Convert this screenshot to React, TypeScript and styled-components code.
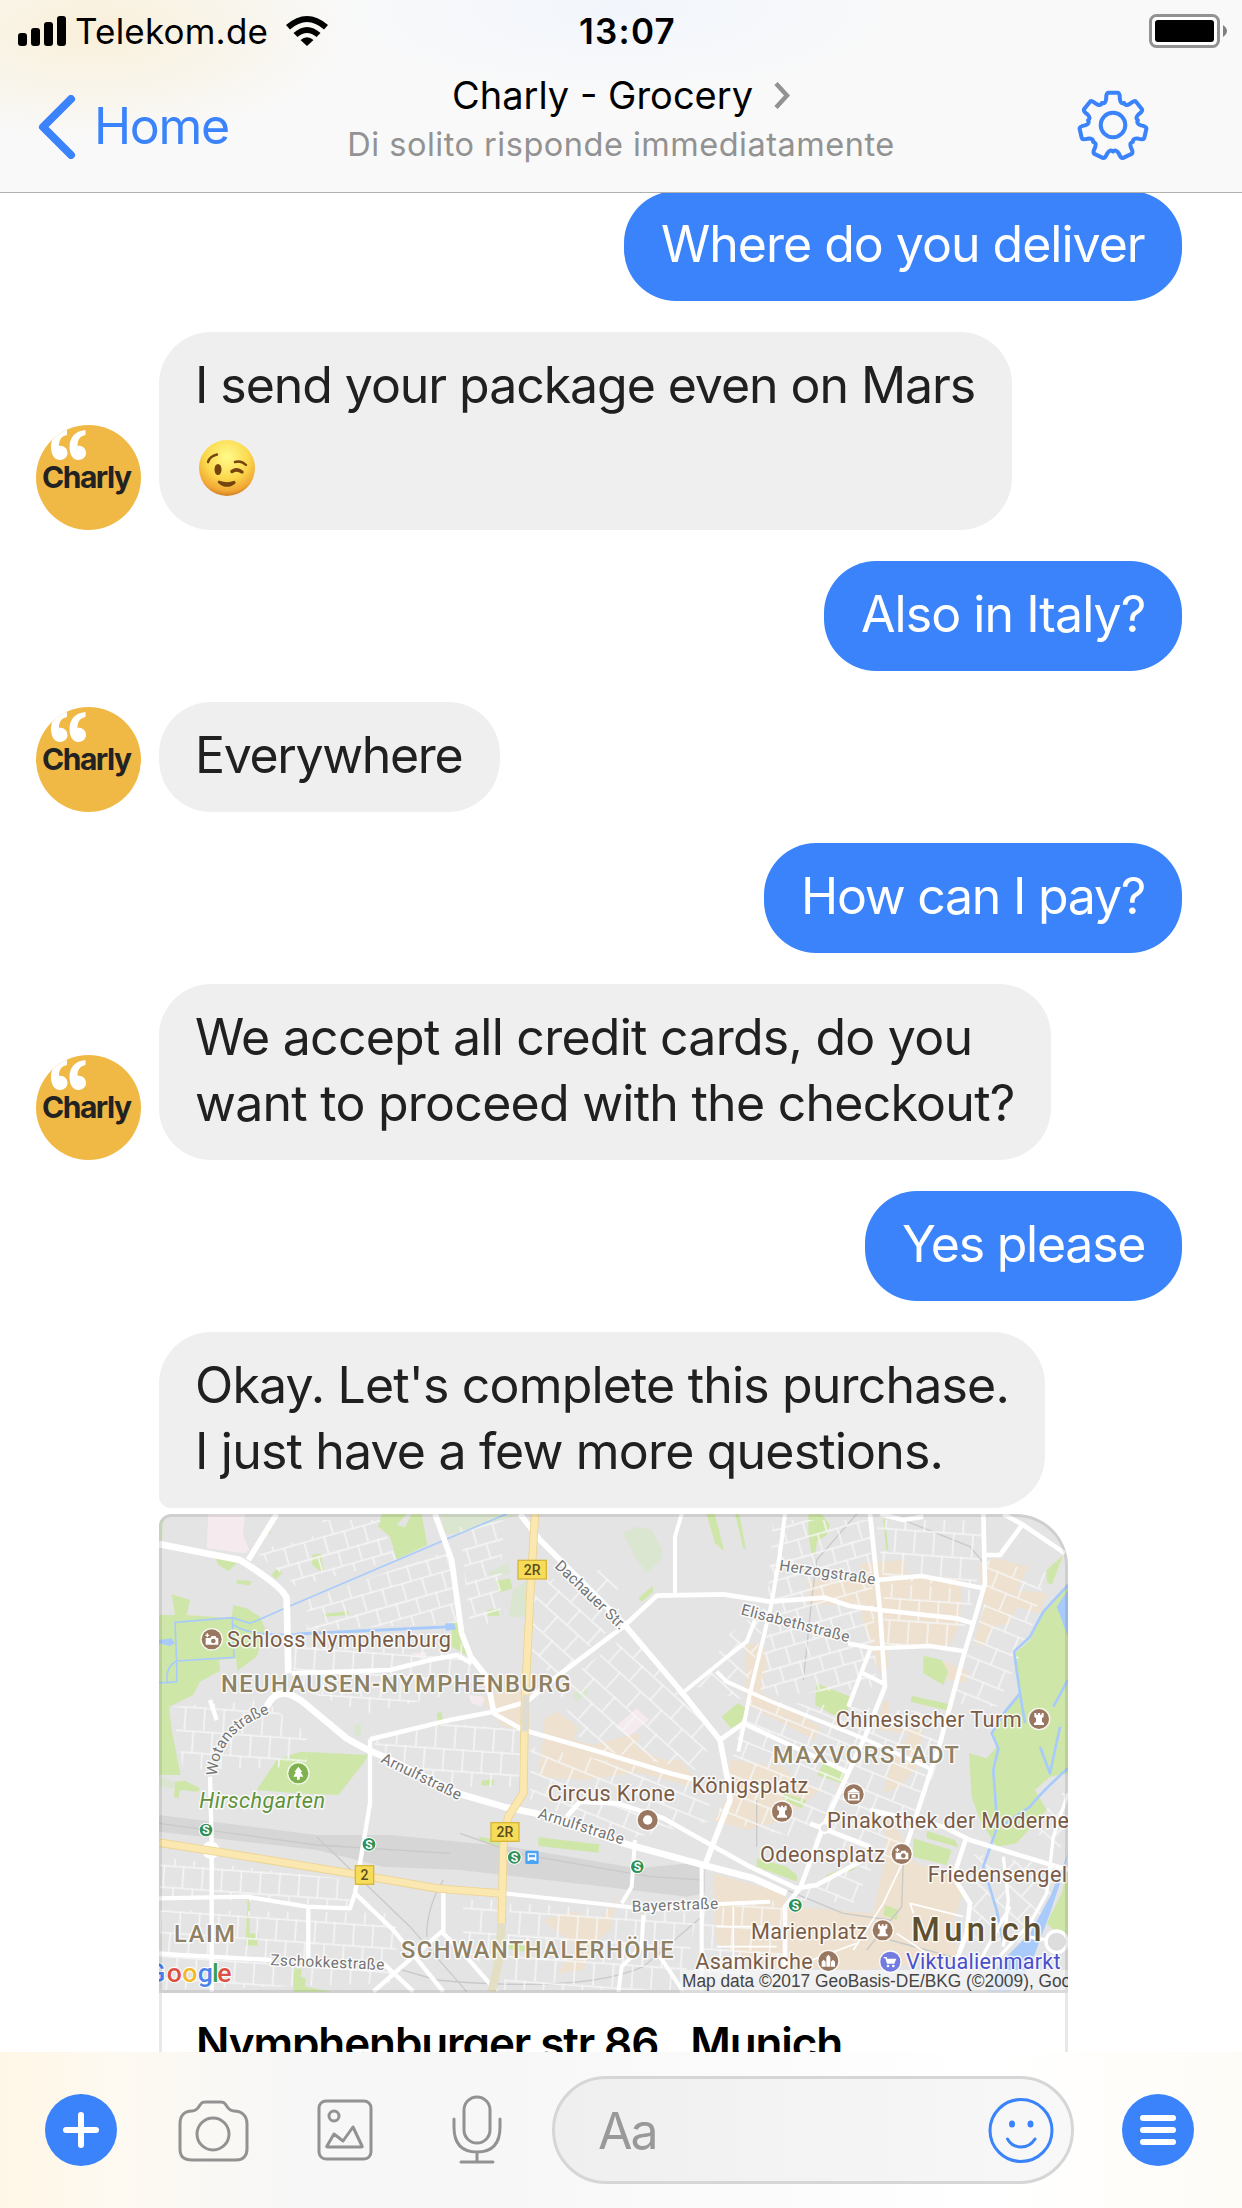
import React from "react";
import styled, { createGlobalStyle } from "styled-components";

const BLUE = "#3a83fa";
const SANS = `Inter, "Liberation Sans", sans-serif`;

const Global = createGlobalStyle`
  * { box-sizing: border-box; }
  body { margin: 0; background: #fff; font-family: ${SANS}; }
  svg { display: block; flex: none; }
`;

const Screen = styled.div`
  width: 1242px;
  height: 2208px;
  display: flex;
  flex-direction: column;
  overflow: hidden;
  background: #fff;
`;

const Header = styled.header`
  height: 193px;
  flex: none;
  border-bottom: 1px solid #b0b0b0;
  background:
    radial-gradient(ellipse 260px 110px at 90px 30px, #f9f0da 0%, rgba(249, 240, 218, 0) 100%),
    radial-gradient(ellipse 300px 90px at 620px 10px, #f2f6fc 0%, rgba(242, 246, 252, 0) 100%),
    #f9f9f9;
`;

const StatusBar = styled.div`
  height: 61px;
  display: grid;
  grid-template-columns: 1fr auto 1fr;
  align-items: center;
  padding: 0 14px 0 18px;
`;

const Carrier = styled.div`
  display: flex;
  align-items: center;
  font-size: 35px;
  letter-spacing: 0.2px;
  color: #000;
`;

const CarrierName = styled.span`
  margin: 0 18px 0 8px;
`;

const Time = styled.div`
  font-size: 35px;
  font-weight: 600;
  letter-spacing: 1.2px;
  padding-left: 9px;
`;

const BatterySlot = styled.div`
  display: flex;
  justify-content: flex-end;
`;

const NavBar = styled.div`
  height: 131px;
  display: grid;
  grid-template-columns: 1fr auto 1fr;
  padding: 0 93px 0 36px;
`;

const Back = styled.a`
  display: flex;
  align-items: center;
  gap: 14px;
  height: 131px;
  color: ${BLUE};
  font-size: 50px;
  letter-spacing: -1.3px;
`;

const BackLabel = styled.span`
  padding-bottom: 2px;
`;

const TitleStack = styled.div`
  display: flex;
  flex-direction: column;
  align-items: center;
  padding-left: 57px;
`;

const Title = styled.div`
  display: flex;
  align-items: center;
  gap: 21px;
  height: 69px;
  padding-bottom: 1px;
  font-size: 38px;
`;

const Subtitle = styled.div`
  height: 30px;
  line-height: 30px;
  font-size: 32.5px;
  letter-spacing: 0.5px;
  color: #929292;
`;

const GearSlot = styled.div`
  display: flex;
  justify-content: flex-end;
  padding-top: 28px;
`;

const Chat = styled.main`
  flex: 1;
  min-height: 0;
  overflow: hidden;
  display: flex;
  flex-direction: column;
  gap: 31px;
  padding: 0 60px 0 36px;
`;

const Row = styled.div<{ $mine?: boolean }>`
  flex: none;
  display: flex;
  align-items: flex-end;
  justify-content: ${(p) => (p.$mine ? "flex-end" : "flex-start")};
  gap: 18px;
  &:first-child { margin-top: -2px; }
`;

const Bubble = styled.div<{ $mine?: boolean; $w: number; $track?: number; $joined?: boolean }>`
  width: ${(p) => p.$w}px;
  padding: 20px 0 24px ${(p) => (p.$mine ? 37 : 36)}px;
  border-radius: ${(p) => (p.$joined ? "52px 52px 52px 12px" : "52px")};
  background: ${(p) => (p.$mine ? BLUE : "#efefef")};
  color: ${(p) => (p.$mine ? "#fff" : "#202020")};
  font-size: 50px;
  line-height: 66px;
  letter-spacing: ${(p) => p.$track ?? 0}px;
  white-space: pre;
`;

const EmojiLine = styled.div`
  height: 88px;
  padding: 21px 0 0 3px;
`;

const Stack = styled.div`
  display: flex;
  flex-direction: column;
  gap: 6px;
  padding-left: 123px;
`;

const Card = styled.article`
  width: 909px;
  height: 620px;
  border-radius: 12px 52px 52px 52px;
  overflow: hidden;
  box-shadow: inset 0 0 0 3px #e8e8e8;
`;

const MapFrame = styled.div`
  position: relative;
  height: 479px;
  &::after {
    content: "";
    position: absolute;
    inset: 0;
    border: 3px solid rgba(0, 0, 0, 0.09);
    border-radius: 12px 52px 0 0;
  }
`;

const CardTitle = styled.h2`
  margin: 0;
  padding: 17px 0 0 37px;
  font-size: 44px;
  line-height: 66px;
  font-weight: 600;
  letter-spacing: -1.1px;
  white-space: pre;
`;

const Composer = styled.footer`
  height: 156px;
  flex: none;
  display: flex;
  align-items: center;
  padding: 0 48px 0 45px;
  background:
    linear-gradient(90deg, rgba(255, 247, 230, 1) 0, rgba(255, 250, 240, 0.8) 120px, rgba(247, 247, 247, 0) 300px),
    linear-gradient(90deg, #f7f7f7 0, #f7f7f7 500px, #fff 980px, #fefcf7 1242px);
`;

const Tools = styled.div`
  display: flex;
  align-items: center;
  width: 507px;
`;

const Tool = styled.div<{ $gap: number }>`
  margin-right: ${(p) => p.$gap}px;
`;

const Input = styled.div`
  width: 522px;
  height: 108px;
  display: flex;
  align-items: center;
  justify-content: space-between;
  padding: 0 17px 0 43px;
  border: 3px solid #d6d6d6;
  border-radius: 54px;
  background: linear-gradient(90deg, #efefef, #f8f8f8);
  font-size: 50px;
  letter-spacing: -2px;
  color: #999;
`;

const Placeholder = styled.span`
  padding-top: 2px;
`;

const MenuSlot = styled.div`
  margin-left: auto;
`;

const AvatarSvg = () => (
  <svg width="105" height="105" viewBox="0 0 105 105">
    <defs><clipPath id="av"><circle cx="52.5" cy="52.5" r="52.5" /></clipPath></defs>
    <g clipPath="url(#av)">
      <rect width="105" height="105" fill="#f0b945" />
      {[15, 33.5].map((x) => (
        <path key={x} transform={`translate(${x} 5)`} fill="#fff" d="M16 0V5C11 6 8 9 8 16C12 15 16.500 18 16.500 23C16.500 27 13 30 9 30C3 30 0 24 0 17C0 8 5 1 16 0Z" />
      ))}
      <text x="6" y="62.500" textLength="90" fontFamily={SANS} fontWeight="700" fontSize="30" fill="#222">Charly</text>
    </g>
  </svg>
);

const Wink = () => (
  <svg width="58" height="58" viewBox="0 0 58 58">
    <defs>
      <radialGradient id="face" cx=".5" cy=".3" r=".72">
        <stop offset="0" stopColor="#fffb8c" /><stop offset=".55" stopColor="#fbd84c" />
        <stop offset=".85" stopColor="#f2a735" /><stop offset="1" stopColor="#c9761f" />
      </radialGradient>
    </defs>
    <circle cx="29" cy="29" r="28" fill="url(#face)" />
    <ellipse cx="20" cy="30.500" rx="3.500" ry="5.500" fill="#74430e" />
    <g fill="none" stroke="#74430e" strokeLinecap="round" strokeWidth="2.400">
      <path d="M10 23Q12 17 19 15.500M37 23Q43 21 48 26" />
      <path d="M34 32.500Q39 29 44 33" strokeWidth="3.500" />
      <path d="M21 43Q29 50 37 43Q29 46 21 43" strokeWidth="2.600" />
    </g>
  </svg>
);

const gearPath = () => {
  const pt = (r: number, deg: number) => {
    const a = ((deg - 90) * Math.PI) / 180;
    return `${(36 + r * Math.cos(a)).toFixed(1)} ${(37 + r * Math.sin(a)).toFixed(1)}`;
  };
  let d = "";
  for (let i = 0; i < 7; i++) {
    const c = (i * 360) / 7;
    d += `${i ? "L" : "M"}${pt(28, c - 14)}Q${pt(33.8, c - 12)} ${pt(33.5, c - 8)}L${pt(33.5, c + 8)}Q${pt(33.8, c + 12)} ${pt(28, c + 14)}`;
    d += `Q${pt(23, c + 19)} ${pt(25.5, c + 25.7)}Q${pt(23, c + 32.4)} ${pt(28, c + 37.4)}`;
  }
  return d + "Z";
};

const Gear = () => (
  <svg width="72" height="74" viewBox="0 0 72 74" fill="none" stroke={BLUE} strokeWidth="4" strokeLinejoin="round">
    <path d={gearPath()} /><circle cx="36" cy="36" r="12.300" />
  </svg>
);

/* ---------- Map ---------- */

const GREEN = "#cfe6a9";
const PALE = "#dbe6d0";

const greens = [
  "M250 315L290 325 330 350 345 385 320 470 262 512 258 475 207 480 210 512 150 545 130 585 57 620 65 690 92 825 27 825 27 345 75 345 65 283 120 300 110 345 245 355Z",
  "M195 172L265 185 235 213 205 195Z", "M365 225L380 205 398 218 378 238Z", "M258 250L262 240 303 243 300 257Z",
  "M487 165L512 160 522 215 505 210 487 195Z", "M695 42H770L740 75 765 82 785 42H815L832 135 740 178 720 110 685 80Z",
  "M518 342L595 333 597 345 520 350Z", "M365 42L350 90 370 102 345 95Z", "M905 365L930 360 935 400 965 475 905 440Z",
  "M380 780L450 755 655 765 640 790 565 885 440 880 320 870Z", "M75 845L105 842 150 865 145 875 90 870 85 895 72 890Z",
  "M860 640L875 635 880 670 865 680Z", "M1038 243L1080 235 1088 265 1045 278Z", "M1012 330L1045 325 1047 347 1014 347Z",
  "M1670 42H1695L1722 152 1695 130Z", "M1465 295L1508 258 1510 275 1475 305Z", "M1755 42H1768L1788 148 1780 145Z",
  "M1715 650L1750 620 1765 610 1788 625 1780 665 1742 685Z", "M1975 42H2015L2040 75 2030 105 2000 125 1997 165 1985 165 1975 100Z",
  "M2200 55H2206L2215 150H2208Z", "M2320 467L2375 480 2395 515 2380 555 2320 520Z", "M2285 587L2395 612 2395 632 2282 605Z",
  "M2000 550L2100 590 2095 630 2050 645 1995 615Z", "M2740 165L2690 210 2690 245 2705 255Z",
  "M2754 250L2680 340 2640 420 2595 460 2595 510 2610 580 2560 640 2525 700 2545 735 2510 775 2457 760 2465 890 2490 960 2540 1040 2600 1030 2690 930 2655 870 2700 830 2754 820Z",
  "M2754 1100L2735 1180 2690 1270 2754 1330Z", "M2290 1015L2405 1050 2390 1095 2290 1070Z", "M2330 992L2415 1020 2425 1042 2330 1015Z",
  "M1820 1075L1910 1100 1940 1125 1942 1145 1820 1100Z", "M2205 1215L2245 1230 2240 1260 2200 1245Z",
  "M2020 790L2085 815 2075 850 2000 825Z", "M1900 880L1970 900 1955 925 1900 900Z", "M995 842L1030 837 1032 855 995 857Z",
  "M1165 1012L1348 1033 1345 1058 1165 1038Z", "M985 1010L1050 1020 1050 1045 990 1020Z",
  "M293 1200H300L298 1300 325 1302 322 1338 285 1335 288 1300Z", "M430 1405L455 1408 452 1430 467 1435 465 1460 545 1475H430Z",
  "M1080 1330L1140 1340 1120 1355 1070 1345Z", "M2030 1125L2130 1085 2110 1110 2030 1135Z",
];
const pales = [
  "M870 42H1110L930 102 885 100Z", "M1015 220L1075 187 1080 220 1020 235Z", "M1090 270L1130 240V350H1075Z",
  "M1420 100L1460 80 1505 90 1537 150 1535 180 1490 218 1460 180Z", "M1270 580L1310 562 1315 580 1275 605Z",
  "M612 675L632 670 634 705 615 708Z", "M27 60L42 62 38 120H27Z", "M27 830L75 845 70 865 27 860Z",
];
const beiges = [
  "M1000 590L1130 560 1120 690 1060 680 1010 620Z", "M1185 655L1220 635 1285 680 1270 720 1335 735 1400 715 1470 700 1460 745 1590 800 1590 850 1400 800 1170 810 1180 700Z",
  "M1785 435L1840 430 1850 490 1835 580 2010 680 1995 720 1860 650 1785 610Z",
  "M1975 240L2140 245 2130 190 2265 180 2270 220 2435 240 2430 370 2400 435 2215 445 2215 500 2190 520 2140 370 2130 320 1970 310Z",
  "M2490 195L2535 175 2635 200 2600 270 2690 280 2670 340 2600 320 2580 370 2530 380 2500 440 2470 430 2500 330Z",
  "M2370 480L2420 500 2455 515 2445 550 2395 540Z", "M2200 600L2220 610 2215 680 2320 690 2300 800 2250 860 2200 880 2220 800 2280 700 2180 690Z",
  "M1170 780H1590L1640 840 1610 860 1520 810 1300 840 1170 830Z", "M1740 780L1900 800 1940 850 2010 870 1900 960 1790 990 1690 960 1740 880Z",
  "M2200 950L2250 1000 2290 1085 2400 1130 2440 1170 2400 1300 2440 1380 2140 1410 1840 1400 1700 1330 1690 1120 1900 1180 1920 1220 2170 1240 2210 1050Z",
  "M1180 1260L1270 1235 1350 1260 1400 1190 1380 1290 1330 1330 1300 1410 1220 1420 1280 1340Z",
];
const pinks = ["M175 42H285L278 105 298 150 285 160 170 145Z", "M1395 680L1460 625 1497 660 1435 710Z", "M785 460L830 455 825 485Z", "M955 585L1005 590 995 620 965 610Z"];

const quarters: [string, string][] = [
  ["M310 150L480 120 520 60 690 60 740 180 440 260Z", "a"],
  ["M470 300L900 150 930 370 470 390Z", "a"],
  ["M430 440L930 420 1000 560 650 640 430 560Z", "b"],
  ["M65 620L340 600 470 700 470 800 100 810Z", "b"],
  ["M670 720L900 670 1110 690 1110 860 930 860 690 790Z", "b"],
  ["M930 80L1060 60 1050 350 960 400Z", "a"],
  ["M1150 250L1400 200 1410 360 1230 520 1130 500Z", "c"],
  ["M1220 560L1440 400 1700 700 1640 810 1300 740Z", "c"],
  ["M1140 740L1640 830 1700 960 1420 1020 1140 900Z", "d"],
  ["M1740 400L1860 310 1780 600 1640 560Z", "c"],
  ["M1870 60L2160 60 2180 560 1830 590Z", "a"],
  ["M2180 60L2500 60 2480 260 2200 240Z", "b"],
  ["M2200 250L2480 270 2420 450 2200 440Z", "b"],
  ["M2510 180L2690 220 2640 400 2540 620 2400 610 2500 330Z", "d"],
  ["M1790 600L2400 640 2350 830 2250 1080 1700 960Z", "d"],
  ["M30 1070L600 1140 600 1220 30 1190Z", "b"],
  ["M30 1230L740 1240 740 1450 30 1470Z", "b"],
  ["M940 1200L1050 1200 1030 1420 940 1350Z", "b"],
  ["M1080 1210L1640 1240 1600 1470 1060 1470Z", "b"],
  ["M1660 1230L1900 1200 1900 1400 1660 1460Z", "b"],
  ["M1950 1160L2180 1080 2110 1210 1950 1200Z", "d"],
  ["M2450 1060L2740 1100 2650 1330 2470 1320Z", "c"],
  ["M2640 980L2754 860 2730 1060Z", "c"],
];

const roads: [string, number][] = [
  ["M27 132L270 180Q400 260 410 295L415 520M350 620Q370 580 400 580Q430 580 470 615L590 715Q650 750 690 765L930 882 1060 920 1180 945 1420 1030 1660 1095 1810 1135 1910 1180", 20],
  ["M380 42L295 180M855 42L905 180 935 400 962 470 1010 530 1030 630M1110 42L1170 120 1420 370 1590 570 1710 720 1735 850 1740 900 1665 1095", 17],
  ["M425 520L720 510 850 478 920 465 965 490M660 718L900 660 1030 635 1130 605 1220 530 1420 380 1520 287 1720 283 1860 305 2025 293 2100 318 2190 330 2420 355 2475 372", 14],
  ["M1575 285V110L1595 42M1590 585L1720 480 1790 425 1815 360M1905 42L1890 160 1865 310 1800 580 1765 755M1700 515L1730 545 1860 603 2140 715 2350 810", 12],
  ["M1710 720L1780 670 1920 735 2100 820M1030 640L1120 690 1330 750 1560 820 1640 840M2160 42L2190 330 2205 560 2145 710 2020 980 1950 1165 1905 1220 1905 1400", 14],
  ["M2180 240L2315 228 2500 265M2500 42L2505 250 2470 370 2440 470 2370 730 2340 820 2265 1050M2505 165H2550L2620 70M2560 42L2620 75 2745 160M2190 42L2260 60 2320 50", 14],
  ["M2095 430L2170 445 2340 438 2450 455M2160 450L2095 620M2140 520L2200 550M180 830L185 1020 185 1475M180 600L200 660", 13],
  ["M27 1195L290 1190 470 1220 600 1225 615 1180 640 1030 660 910 660 718M475 1225V1380M27 1360L90 1365 365 1380", 13],
  ["M615 1180L730 1290 880 1475M670 1475L875 1295 940 1360 1040 1475M700 1390L790 1475M880 1175V1295", 13],
  ["M1060 1180L1430 1220 1490 1230 1710 1212 1860 1205M1455 1020L1445 1160 1415 1210M1480 1245L1475 1340 1415 1400 1405 1475M1655 1090V1475M1530 1370L1600 1475", 12],
  ["M1250 950L1290 905 1400 910 1540 955 1800 1100 1940 1165 2000 1155 2140 1080M1980 970L2160 1040M2160 930L2380 980 2460 1020 2754 1110M2450 1010L2410 1130 2460 1210 2450 1300 2420 1380", 14],
  ["M2560 1070L2575 1200 2560 1340M2754 880L2710 1010 2690 1180 2640 1270 2520 1400M2580 1220L2480 1400M2630 1310L2754 1330", 10],
  ["M2280 1040L2200 1210 2110 1350M2290 1240L2280 1210 2440 1250M2240 1300L2360 1380M1960 1390L2120 1330M1700 1280H1880M1700 1340H1880M1750 1220V1400", 5],
];

type Label = { t: string; x: number; y: number; w: number; s?: number; c?: string; r?: number; wt?: number; i?: boolean };
const BROWN = "#7b5c47";
const OLIVE = "#8f8264";
const GRAY = "#747474";
const labels: Label[] = [
  { t: "Schloss Nymphenburg", x: 231, y: 440, w: 672 },
  { t: "NEUHAUSEN-NYMPHENBURG", x: 213, y: 575, w: 1049, s: 71, c: OLIVE, wt: 500 },
  { t: "Chinesischer Turm", x: 2057, y: 680, w: 558 },
  { t: "MAXVORSTADT", x: 1868, y: 790, w: 559, s: 71, c: OLIVE, wt: 500 },
  { t: "Hirschgarten", x: 148, y: 923, w: 377, s: 65, c: "#5f9339", i: true },
  { t: "Circus Krone", x: 1193, y: 902, w: 382 },
  { t: "Königsplatz", x: 1625, y: 878, w: 350 },
  { t: "Pinakothek der Moderne", x: 2031, y: 985, w: 726 },
  { t: "Odeonsplatz", x: 1830, y: 1085, w: 375 },
  { t: "Friedensengel", x: 2333, y: 1147, w: 418 },
  { t: "Marienplatz", x: 1803, y: 1317, w: 349 },
  { t: "Munich", x: 2284, y: 1322, w: 390, s: 98, c: "#5d4f30", wt: 500 },
  { t: "Asamkirche", x: 1636, y: 1407, w: 352 },
  { t: "Viktualienmarkt", x: 2268, y: 1407, w: 464, c: "#4a4fcc" },
  { t: "LAIM", x: 72, y: 1327, w: 183, s: 71, c: OLIVE, wt: 500 },
  { t: "SCHWANTHALERHÖHE", x: 753, y: 1375, w: 818, s: 71, c: OLIVE, wt: 500 },
  { t: "Dachauer Str.", x: 1212, y: 200, w: 276, s: 46, c: GRAY, r: 44 },
  { t: "Herzogstraße", x: 1886, y: 211, w: 291, s: 46, c: GRAY, r: 8.500 },
  { t: "Elisabethstraße", x: 1771, y: 343, w: 334, s: 46, c: GRAY, r: 14.500 },
  { t: "Arnulfstraße", x: 690, y: 786, w: 262, s: 46, c: GRAY, r: 26 },
  { t: "Arnulfstraße", x: 1162, y: 953, w: 267, s: 46, c: GRAY, r: 17.500 },
  { t: "Bayerstraße", x: 1446, y: 1235, w: 259, s: 46, c: GRAY, r: -2 },
  { t: "Zschokkestraße", x: 361, y: 1395, w: 342, s: 46, c: GRAY, r: 2.500 },
];

const MapText = styled.text`
  font-family: Roboto, sans-serif;
  paint-order: stroke;
  stroke: rgba(255, 255, 255, 0.8);
  stroke-width: 9px;
  stroke-linejoin: round;
`;

const LogoText = styled.text`
  font-family: Roboto, sans-serif;
  font-size: 80px;
  font-weight: 500;
  paint-order: stroke;
  stroke: #fff;
  stroke-width: 6px;
`;

const Poi = ({ x, y, kind, color = "#997761" }: { x: number; y: number; kind: string; color?: string }) => (
  <g transform={`translate(${x} ${y})`}>
    <circle r="34" fill="#fff" opacity=".8" />
    <circle r="30" fill={color} />
    {kind === "camera" && <g><path d="M-18 -4H-4L0 -10H12L15 -4H20V16H-18Z" fill="#fff" /><circle cx="5" cy="5" r="7" fill={color} /><path d="M-13 -18V-6M-19 -12H-7" stroke="#fff" strokeWidth="4" /></g>}
    {kind === "rook" && <path d="M-14 -18H-8V-13H-3V-18H3V-13H8V-18H14V-6L9 -3V8L15 13V18H-15V13L-9 8V-3L-14 -6Z" fill="#fff" />}
    {kind === "tree" && <path d="M0 -20L12 -4H7L15 10H4V19H-4V10H-15L-7 -4H-12Z" fill="#fff" />}
    {kind === "ring" && <circle r="14" fill="#fff" />}
    {kind === "museum" && <g><path d="M0 -19L20 -6H-20Z" fill="#fff" /><path d="M-15 -3V16H15V-3Z" fill="none" stroke="#fff" strokeWidth="5" /><path d="M-6 2H6V10H-6Z" fill="#fff" /></g>}
    {kind === "city" && <path d="M-20 17V2L-14 -4L-8 2V17M-6 17V-12L0 -19L6 -12V17M8 17V2L14 -4L20 2V17" fill="#fff" />}
    {kind === "cart" && <g fill="#fff"><path d="M-20 -14H-11L-9 -9H18L12 6H-10L-15 -10H-20Z" /><circle cx="-7" cy="13" r="4" /><circle cx="9" cy="13" r="4" /></g>}
  </g>
);

const SBahn = ({ x, y }: { x: number; y: number }) => (
  <g transform={`translate(${x} ${y})`}>
    <circle r="22" fill="#fff" /><circle r="19" fill="#2f9157" />
    <text y="13" textAnchor="middle" fontFamily="Roboto, sans-serif" fontWeight="700" fontSize="36" fill="#fff">S</text>
  </g>
);

const Shield = ({ x, y, w, t }: { x: number; y: number; w: number; t: string }) => (
  <g>
    <rect x={x} y={y} width={w} height="56" fill="#f6dc59" stroke="#d7b63c" strokeWidth="4" />
    <text x={x + w / 2} y={y + 43} textAnchor="middle" fontFamily="Roboto, sans-serif" fontWeight="500" fontSize="42" fill="#5b4d1c">{t}</text>
  </g>
);

const grids: Record<string, [number, number, number]> = { a: [-16, 62, 50], b: [4, 58, 68], c: [42, 84, 62], d: [22, 84, 54] };

const CityMap = () => (
  <svg width="909" height="479" viewBox="27 42 2727 1437" preserveAspectRatio="none">
    <defs>
      {Object.entries(grids).map(([k, [r, w, h]]) => (
        <pattern key={k} id={`g${k}`} width={w} height={h * 2} patternUnits="userSpaceOnUse" patternTransform={`rotate(${r})`}>
          <path d={`M0 4H${w}M0 ${h}H${w}M4 0V${h}M${w * 0.6} ${h}V${h * 2}`} stroke="#f6f6f6" strokeWidth="4.500" fill="none" />
        </pattern>
      ))}
      <path id="wotan" d="M201 828Q206 700 350 643" />
    </defs>
    <rect x="27" y="42" width="2727" height="1437" fill="#e4e4e4" />
    {pales.map((d) => <path key={d} d={d} fill={PALE} />)}
    {pinks.map((d) => <path key={d} d={d} fill="#f5ebef" />)}
    {beiges.map((d) => <path key={d} d={d} fill="#eee1cf" />)}
    {greens.map((d) => <path key={d} d={d} fill={GREEN} />)}
    <path d="M27 945L500 1005 720 1005 1080 1040 1460 1105 1665 1085V1180L1610 1190 1320 1155 930 1110 700 1100 500 1050 27 995Z" fill="#d6d6d6" />
    <g fill="none" stroke="#c9c9c9" strokeWidth="4">
      <path d="M500 1010L780 1280 950 1475M830 1310Q830 1220 880 1140M740 1405L860 1440Q1300 1480 1480 1400L1655 1250M27 970L500 1035 900 1060M930 1000L1100 1060 1500 1130 1660 1140" />
      <path d="M2120 42L2000 180 1985 300 1960 540M2260 60L2460 140 2510 200M1820 900L1820 1040M2260 1080L2255 1220 2150 1350M1860 1150L2080 1240 2220 1260M2220 1320L2440 1380" />
    </g>
    {quarters.map(([d, k]) => <path key={d} d={d} fill={`url(#g${k})`} />)}
    <g fill="none" stroke="#a9cbfb" strokeLinejoin="round">
      <path d="M330 358L420 318 720 190 960 88 1070 42M245 352L300 370 330 358M75 367L247 353 252 472 80 483ZM80 483Q45 500 52 548L80 545 80 483M27 548H52M245 370Q290 410 440 402" strokeWidth="5" />
      <path d="M2754 255L2680 335 2640 410 2592 455 2610 580 2565 635 2525 700 2545 745 2530 810 2542 980 2500 1100 2540 1230 2560 1330M2754 805Q2680 870 2640 920L2560 975M2754 540L2710 620M2730 680L2700 820 2670 740M2610 580L2625 670" strokeWidth="8" />
      <path d="M440 402L900 380" strokeWidth="9" />
    </g>
    <path d="M885 370H912L918 388 888 392ZM2720 320L2754 270V410ZM2754 1060L2730 1150 2700 1240 2640 1400 2580 1475H2510L2550 1390 2640 1300 2700 1190ZM27 420L65 415 75 430 60 438 27 430Z" fill="#a9cbfb" />
    {roads.map(([d, w]) => <path key={d} d={d} fill="none" stroke="#fff" strokeWidth={w} strokeLinejoin="round" />)}
    <circle cx="2720" cy="1325" r="32" fill="#ddd" stroke="#fff" strokeWidth="10" />
    <circle cx="182" cy="1050" r="26" fill="#fff" />
    <circle cx="2024" cy="984" r="15" fill="#e4e4e4" stroke="#fff" strokeWidth="7" />
    <g fill="none" strokeLinejoin="round">
      <path d="M27 1028L200 1055 600 1120 860 1165 1050 1180M1155 42L1142 260 1125 600 1120 880 1075 950 1060 1040 1055 1270" stroke="#ecd392" strokeWidth="25" />
      <path d="M27 1028L200 1055 600 1120 860 1165 1050 1180M1155 42L1142 260 1125 600 1120 880 1075 950 1060 1040 1055 1270" stroke="#fbe7b0" strokeWidth="20" />
      <path d="M1055 1270L1045 1390 1025 1475" stroke="#e3dfc4" strokeWidth="26" />
      <path d="M1128 585L1125 695" stroke="#dfdbd0" strokeWidth="20" />
    </g>
    <rect x="1590" y="1410" width="1164" height="70" fill="#f5f5f5" opacity=".75" />
    {labels.map((l) => (
      <MapText key={l.t + l.x} x={l.x} y={l.y} textLength={l.w} fontSize={l.s ?? 65} fontWeight={l.wt ?? 400}
        fontStyle={l.i ? "italic" : "normal"} fill={l.c ?? BROWN} transform={l.r ? `rotate(${l.r} ${l.x} ${l.y})` : undefined}>{l.t}</MapText>
    ))}
    <MapText fontSize="46" fill={GRAY}><textPath href="#wotan">Wotanstraße</textPath></MapText>
    <Poi x={185} y={418} kind="camera" /><Poi x={2667} y={657} kind="rook" /><Poi x={445} y={820} kind="tree" color="#7fb24e" />
    <Poi x={1493} y={960} kind="ring" /><Poi x={1896} y={935} kind="rook" /><Poi x={2111} y={883} kind="museum" />
    <Poi x={2255} y={1062} kind="camera" /><Poi x={2198} y={1291} kind="rook" /><Poi x={2035} y={1383} kind="city" />
    <Poi x={2221} y={1385} kind="cart" color="#737ae0" />
    <SBahn x={168} y={990} /><SBahn x={657} y={1033} /><SBahn x={1093} y={1072} /><SBahn x={1462} y={1100} /><SBahn x={1936} y={1216} />
    <Shield x={1104} y={181} w={85} t="2R" /><Shield x={1023} y={968} w={84} t="2R" /><Shield x={616} y={1097} w={55} t="2" />
    <g transform="translate(1146 1072)"><rect x="-20" y="-20" width="40" height="40" rx="4" fill="#4ba3f5" /><path d="M-13 -12H13V11H8V7H-8V11H-13ZM-9 -8V0H9V-8Z" fill="#fff" fillRule="evenodd" /></g>
    <LogoText y="1445"><tspan x="-8" fill="#4b84ee">G</tspan><tspan x="50" fill="#dd5145">o</tspan><tspan x="97" fill="#f3b92c">o</tspan><tspan x="143" fill="#4b84ee">g</tspan><tspan x="186" fill="#35a152">l</tspan><tspan x="202" fill="#dd5145">e</tspan></LogoText>
    <text x="1596" y="1460" textLength="1237" lengthAdjust="spacingAndGlyphs" fontFamily="'Liberation Sans', sans-serif" fontSize="54" fill="#454545">Map data ©2017 GeoBasis-DE/BKG (©2009), Google</text>
  </svg>
);

type Message = { mine?: boolean; text: string; w: number; track?: number; wink?: boolean };
const messages: Message[] = [
  { mine: true, text: "Where do you deliver", w: 558, track: -1 },
  { text: "I send your package even on Mars", w: 853, track: -1.06, wink: true },
  { mine: true, text: "Also in Italy?", w: 358, track: -0.95 },
  { text: "Everywhere", w: 341, track: -1.35 },
  { mine: true, text: "How can I pay?", w: 418, track: -1.25 },
  { text: "We accept all credit cards, do you\nwant to proceed with the checkout?", w: 892, track: -0.74 },
  { mine: true, text: "Yes please", w: 317, track: -1.25 },
];

export default function App() {
  const line = { fill: "none", stroke: "#929292", strokeWidth: 3, strokeLinecap: "round" as const, strokeLinejoin: "round" as const };
  return (
    <Screen>
      <Global />
      <Header>
        <StatusBar>
          <Carrier>
            <svg width="49" height="30" viewBox="0 0 49 30">
              <rect y="17" width="9" height="13" rx="3" /><rect x="13" y="12" width="9" height="18" rx="3" />
              <rect x="26" y="6" width="9" height="24" rx="3" /><rect x="39" width="9" height="30" rx="3" />
            </svg>
            <CarrierName>Telekom.de</CarrierName>
            <svg width="42" height="30" viewBox="0 0 42 30">
              <path d="M0 9Q21 -9 42 9L38 13.500Q21 -1.500 4 13.500Z" />
              <path d="M7.500 17Q21 5 34.500 17L30.500 21Q21 13 11.500 21Z" />
              <path d="M14.500 24Q21 18.500 27.500 24L21 30Z" />
            </svg>
          </Carrier>
          <Time>13:07</Time>
          <BatterySlot>
            <svg width="79" height="34" viewBox="0 0 79 34">
              <rect x="1.500" y="1.500" width="68" height="31" rx="6" fill="#fff" stroke="#929292" strokeWidth="3" />
              <rect x="6" y="6" width="59" height="22" rx="3" /><path d="M74 11Q78 14 78 17T74 23Z" fill="#808080" />
            </svg>
          </BatterySlot>
        </StatusBar>
        <NavBar>
          <Back>
            <svg width="44" height="64" viewBox="0 0 44 64"><path d="M35 4L7 32 35 60" fill="none" stroke={BLUE} strokeWidth="8" strokeLinecap="round" strokeLinejoin="round" /></svg>
            <BackLabel>Home</BackLabel>
          </Back>
          <TitleStack>
            <Title><span>Charly - Grocery</span><svg width="16" height="27" viewBox="0 0 16 27"><path d="M2 1.500L13 13.500 2 25.500" fill="none" stroke="#929292" strokeWidth="4.500" /></svg></Title>
            <Subtitle>Di solito risponde immediatamente</Subtitle>
          </TitleStack>
          <GearSlot><Gear /></GearSlot>
        </NavBar>
      </Header>
      <Chat>
        {messages.map((m) => (
          <Row key={m.text} $mine={m.mine}>
            {!m.mine && <AvatarSvg />}
            <Bubble $mine={m.mine} $w={m.w} $track={m.track}>{m.text}{m.wink && <EmojiLine><Wink /></EmojiLine>}</Bubble>
          </Row>
        ))}
        <Stack>
          <Bubble $w={886} $track={-0.82} $joined>{"Okay. Let's complete this purchase.\nI just have a few more questions."}</Bubble>
          <Card>
            <MapFrame><CityMap /></MapFrame>
            <CardTitle>Nymphenburger str 86 , Munich ,</CardTitle>
          </Card>
        </Stack>
      </Chat>
      <Composer>
        <Tools>
          <Tool $gap={60}><svg width="72" height="72" viewBox="0 0 72 72"><circle cx="36" cy="36" r="36" fill={BLUE} /><path d="M36 21V51M21 36H51" stroke="#fff" strokeWidth="6" strokeLinecap="round" /></svg></Tool>
          <Tool $gap={68}><svg width="72" height="72" viewBox="0 0 72 72" {...line}><path d="M15 17C20 17 21 14 23 11C25 8 26 8 29 8H43C46 8 47 8 49 11C51 14 52 17 57 17C65 17 70 22 70 30V55C70 62 66 66 59 66H15C6 66 3 62 3 55V30C3 22 7 17 15 17Z" /><circle cx="36" cy="40" r="16" /></svg></Tool>
          <Tool $gap={79}><svg width="56" height="62" viewBox="0 0 56 62" {...line}><rect x="2" y="2" width="52" height="58" rx="7" /><circle cx="17" cy="17" r="5" /><path d="M10 47L17 35 26 42 36 28 45 47Q46 48 44 48H11Q9 48 10 47Z" /></svg></Tool>
          <Tool $gap={0}><svg width="50" height="70" viewBox="0 0 50 70" {...line}><rect x="12" y="2" width="26" height="46" rx="13" /><path d="M2 24V32Q2 57 25 57Q48 57 48 32V24M25 57V67M9 67H41" /></svg></Tool>
        </Tools>
        <Input>
          <Placeholder>Aa</Placeholder>
          <svg width="66" height="66" viewBox="0 0 66 66"><circle cx="33" cy="33.500" r="31" fill="none" stroke={BLUE} strokeWidth="3" /><ellipse cx="24" cy="27" rx="3" ry="3.500" fill={BLUE} /><ellipse cx="42.500" cy="27" rx="3" ry="3.500" fill={BLUE} /><path d="M19.500 42Q24 50 33 50T47 42" fill="none" stroke={BLUE} strokeWidth="3" strokeLinecap="round" /></svg>
        </Input>
        <MenuSlot><svg width="72" height="72" viewBox="0 0 72 72"><circle cx="36" cy="36" r="36" fill={BLUE} /><path d="M21 24H51M21 36H51M21 48H51" stroke="#fff" strokeWidth="6" strokeLinecap="round" /></svg></MenuSlot>
      </Composer>
    </Screen>
  );
}
